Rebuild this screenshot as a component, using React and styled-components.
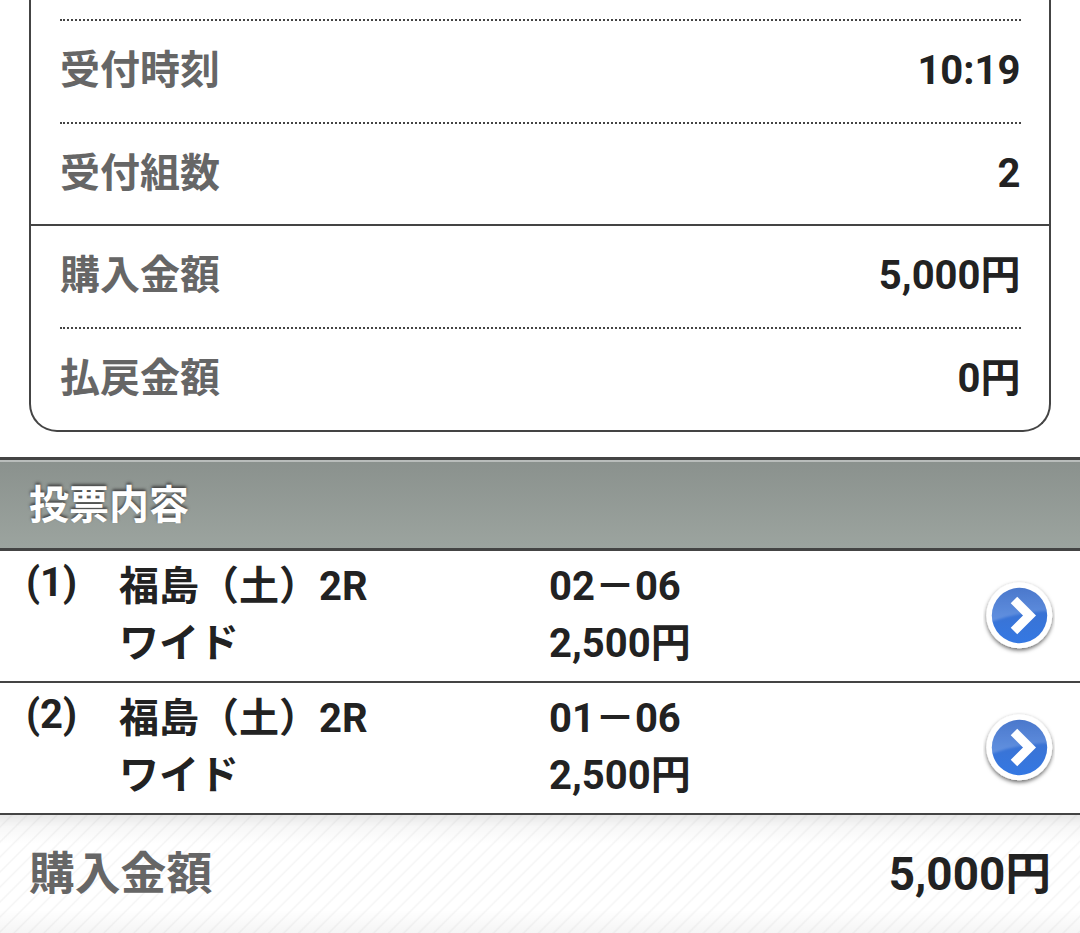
import React from 'react';
import styled, { createGlobalStyle } from 'styled-components';

const GlobalStyle = createGlobalStyle`
  body {
    margin: 0;
    background: #fff;
    color: #222;
    font-family: Roboto, "Noto Sans CJK JP", sans-serif;
    font-size: 40px;
    font-weight: 700;
    line-height: 56px;
    overflow: hidden;
  }
`;

const Page = styled.main`
  height: 933px;
  display: flex;
  flex-direction: column;
  overflow: hidden;
`;

const Card = styled.section`
  height: 432px;
  margin: 0 29px 25px;
  flex: none;
  box-sizing: border-box;
  border: 2px solid #444;
  border-top: 0;
  border-radius: 0 0 28px 28px;
`;

const Group = styled.dl`
  margin: 0;
  padding: ${(props) => (props.$first ? '19px 28px 0 29px' : '0 28px 0 29px')};
  border-top: ${(props) => (props.$first ? '0' : '2px solid #444')};
`;

const SummaryRow = styled.div`
  height: ${(props) => props.$height}px;
  box-sizing: border-box;
  display: flex;
  justify-content: space-between;
  align-items: center;
  border-top: ${(props) => (props.$dotted ? '2px dotted #444' : '0')};

  dt {
    color: #666;
    padding-bottom: 1px;
  }

  dd {
    margin: 0;
    padding: 0 0.5px 1px 0;
  }
`;

const Heading = styled.h2`
  height: 94px;
  margin: 0;
  padding: 3px 29px 0;
  flex: none;
  box-sizing: border-box;
  display: flex;
  align-items: center;
  border-top: 3px solid #444;
  border-bottom: 3px solid #444;
  background: linear-gradient(#8a918d, #9ca49f);
  box-shadow: inset 0 2px 0 #b9bdbb;
  color: #fff;
  font-size: 40px;
  text-shadow: 0 -2px 3px #444;
`;

const BetRow = styled.article`
  height: 132px;
  padding: 7px 25px 0 26px;
  flex: none;
  box-sizing: border-box;
  display: grid;
  grid-template-columns: 93px 430px 1fr 72px;
  border-bottom: 2px solid #444;
  line-height: 57px;

  p {
    margin: 0;
  }
`;

const BetNumber = styled.span`
  margin-top: -4px;
`;

const DetailButton = styled.button`
  width: 72px;
  height: 76px;
  margin-top: 22px;
  padding: 0;
  border: 0;
  background: none;
`;

const Total = styled.footer`
  flex: 1;
  padding: 2px 29px 0;
  display: flex;
  align-items: center;
  justify-content: space-between;
  font-size: 45.8px;
  background:
    linear-gradient(rgba(0, 0, 0, 0.09), rgba(0, 0, 0, 0.03) 10%, transparent 25%, transparent 80%, rgba(0, 0, 0, 0.04)),
    repeating-linear-gradient(135deg, #fff 0 7px, #f5f5f5 8.5px, #fff 10px 10.6px);

  span {
    color: #666;
  }
`;

const ArrowIcon = () => (
  <svg width="72" height="76" viewBox="0 0 72 76">
    <defs>
      <linearGradient id="blue" x1="0" y1="0" x2="0" y2="1">
        <stop offset="0" stopColor="#3f6fc8" />
        <stop offset="1" stopColor="#3478e3" />
      </linearGradient>
      <linearGradient id="gloss" x1="0" y1="0" x2="0" y2="1">
        <stop offset="0" stopColor="#fff" stopOpacity="0.04" />
        <stop offset="1" stopColor="#fff" stopOpacity="0.22" />
      </linearGradient>
      <filter id="shadow" x="-20%" y="-20%" width="140%" height="140%">
        <feDropShadow dx="0" dy="2" stdDeviation="2" floodColor="#000" floodOpacity="0.6" />
      </filter>
      <filter id="soften">
        <feGaussianBlur stdDeviation="1" />
      </filter>
      <clipPath id="disc">
        <circle cx="36.5" cy="35.5" r="27.7" />
      </clipPath>
    </defs>
    <circle cx="36.3" cy="35.3" r="33" fill="#fff" filter="url(#shadow)" />
    <circle cx="36.5" cy="35.5" r="27.7" fill="url(#blue)" />
    <g clipPath="url(#disc)">
      <path d="M4 3H69V31Q38 31 4 43Z" fill="url(#gloss)" filter="url(#soften)" />
    </g>
    <path d="M31 20L46.5 35.5L31 51" fill="none" stroke="#fff" strokeWidth="9.2" />
  </svg>
);

const bets = [
  { no: 1, race: '福島（土）2R', type: 'ワイド', horses: '02－06', amount: '2,500円' },
  { no: 2, race: '福島（土）2R', type: 'ワイド', horses: '01－06', amount: '2,500円' },
];

const Summary = ({ label, value, height, dotted }) => (
  <SummaryRow $height={height} $dotted={dotted}>
    <dt>{label}</dt>
    <dd>{value}</dd>
  </SummaryRow>
);

export default () => {
  return (
    <Page lang="ja">
      <GlobalStyle />
      <Card>
        <Group $first>
          <Summary label="受付時刻" value="10:19" height={103} dotted />
          <Summary label="受付組数" value="2" height={102} dotted />
        </Group>
        <Group>
          <Summary label="購入金額" value="5,000円" height={101} />
          <Summary label="払戻金額" value="0円" height={103} dotted />
        </Group>
      </Card>

      <Heading>投票内容</Heading>
      {bets.map((bet) => (
        <BetRow key={bet.no}>
          <BetNumber>({bet.no})</BetNumber>
          <div>
            <p>{bet.race}</p>
            <p>{bet.type}</p>
          </div>
          <div>
            <p>{bet.horses}</p>
            <p>{bet.amount}</p>
          </div>
          <DetailButton aria-label="詳細">
            <ArrowIcon />
          </DetailButton>
        </BetRow>
      ))}

      <Total>
        <span>購入金額</span>
        <div>5,000円</div>
      </Total>
    </Page>
  )
}
